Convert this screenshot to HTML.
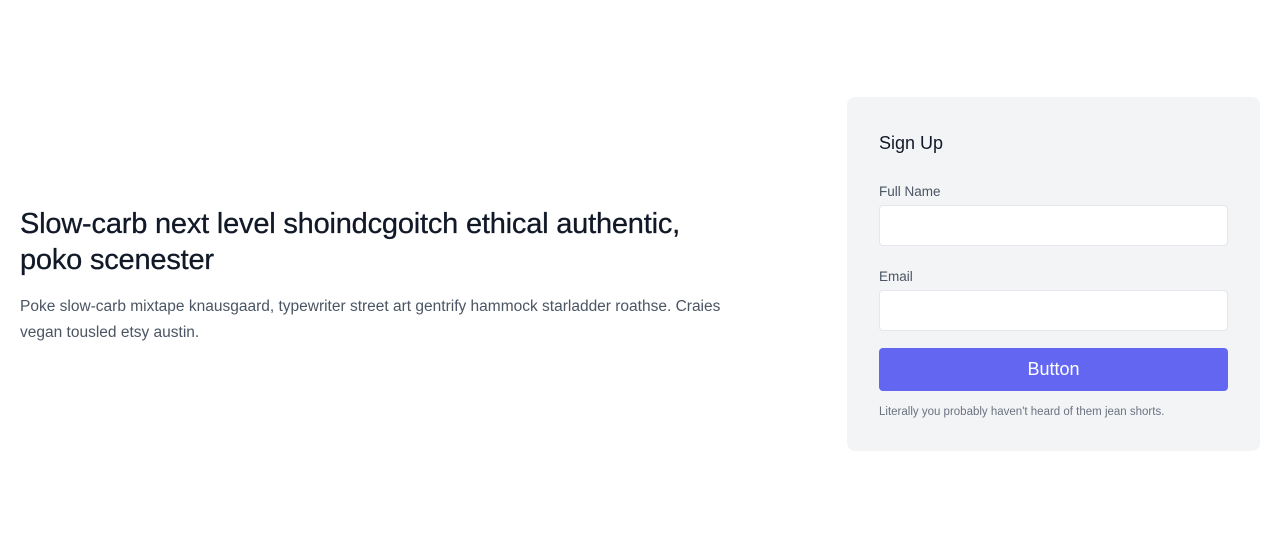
<!DOCTYPE html>
<html><head><style>
*{box-sizing:border-box;margin:0;padding:0}
body{width:1280px;height:547px;background:#fff;font-family:"Liberation Sans",sans-serif;color:#4b5563}
.wrap{display:flex;align-items:center;padding:96px 20px;height:547px}
.left{width:744px;padding-right:40px;padding-top:5px}
h1{font-size:29px;line-height:36px;font-weight:500;color:#111827;letter-spacing:-0.2px;-webkit-text-stroke:0.3px #111827}
.left p{margin-top:16px;font-size:15.5px;line-height:26px}
.card{margin-left:auto;width:413px;height:354px;background:#f3f4f6;border-radius:8px;padding:32px}
h2{font-size:18px;line-height:28px;font-weight:500;color:#111827;margin-bottom:25px}
label{display:block;font-size:13.5px;line-height:20px;color:#4b5563}
.in{height:41px;background:#fff;border:1px solid #e5e7eb;border-radius:4px;margin-top:3px}
button{display:block;width:100%;height:43px;background:#6366f1;color:#fff;border:0;border-radius:4px;font-size:18px;font-family:inherit;margin-top:17px}
.s{font-size:11.5px;color:#6b7280;margin-top:13px;line-height:16px}
</style></head><body>
<div class="wrap">
<div class="left">
<h1>Slow-carb next level shoindcgoitch ethical authentic, poko scenester</h1>
<p>Poke slow-carb mixtape knausgaard, typewriter street art gentrify hammock starladder roathse. Craies vegan tousled etsy austin.</p>
</div>
<div class="card">
<h2>Sign Up</h2>
<label>Full Name</label><div class="in"></div>
<label style="margin-top:21px">Email</label><div class="in"></div>
<button>Button</button>
<p class="s">Literally you probably haven't heard of them jean shorts.</p>
</div>
</div>
</body></html>
